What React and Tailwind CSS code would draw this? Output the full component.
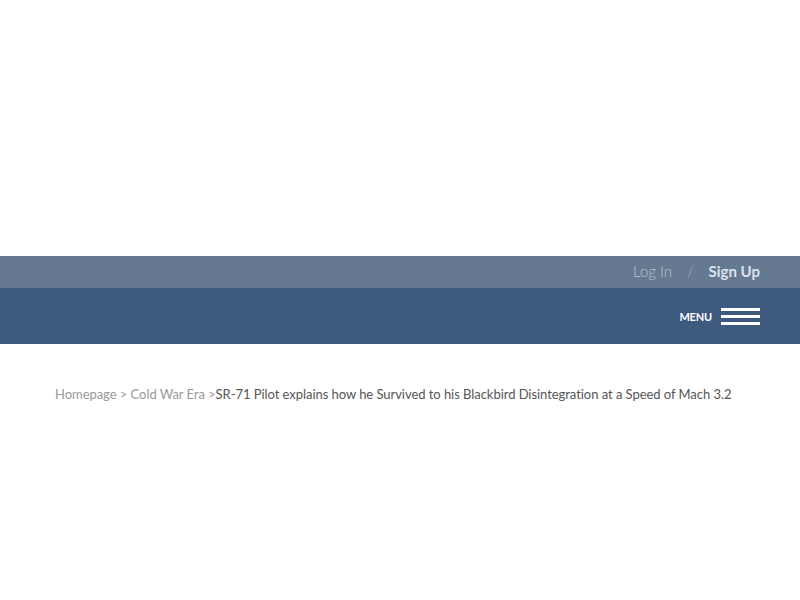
export default function App() {
  return (
    <div className="min-h-screen bg-white font-['Lato','Liberation_Sans',sans-serif]">
      {/* Ad space */}
      <div className="h-[256px]" />

      {/* Auth bar */}
      <div className="h-[32px] bg-[#657991] flex items-center justify-end pr-[40px] pb-[2px] text-[15px]">
        <a className="text-[#b9c3d0] font-light">Log In</a>
        <span className="text-[#9aa8b9] mx-[15px] font-light">/</span>
        <a className="text-[#dce2ea] font-bold">Sign Up</a>
      </div>

      {/* Nav bar */}
      <div className="h-[56px] bg-[#3e5a7e] flex items-center justify-end pr-[40px]">
        <span className="text-white text-[11px] font-bold mr-[9px] mt-[2px] tracking-[-0.2px]">MENU</span>
        <div className="flex flex-col gap-[4px]">
          <span className="block w-[39px] h-[3px] bg-white" />
          <span className="block w-[39px] h-[3px] bg-white" />
          <span className="block w-[39px] h-[3px] bg-white" />
        </div>
      </div>

      {/* Breadcrumb */}
      <div className="pl-[55px] pt-[41px] text-[13px] text-[#999] tracking-[-0.05px]">
        <a>Homepage</a> &gt; <a>Cold War Era</a> &gt;
        <span className="text-[#555]">SR-71 Pilot explains how he Survived to his Blackbird Disintegration at a Speed of Mach 3.2</span>
      </div>
    </div>
  );
}
